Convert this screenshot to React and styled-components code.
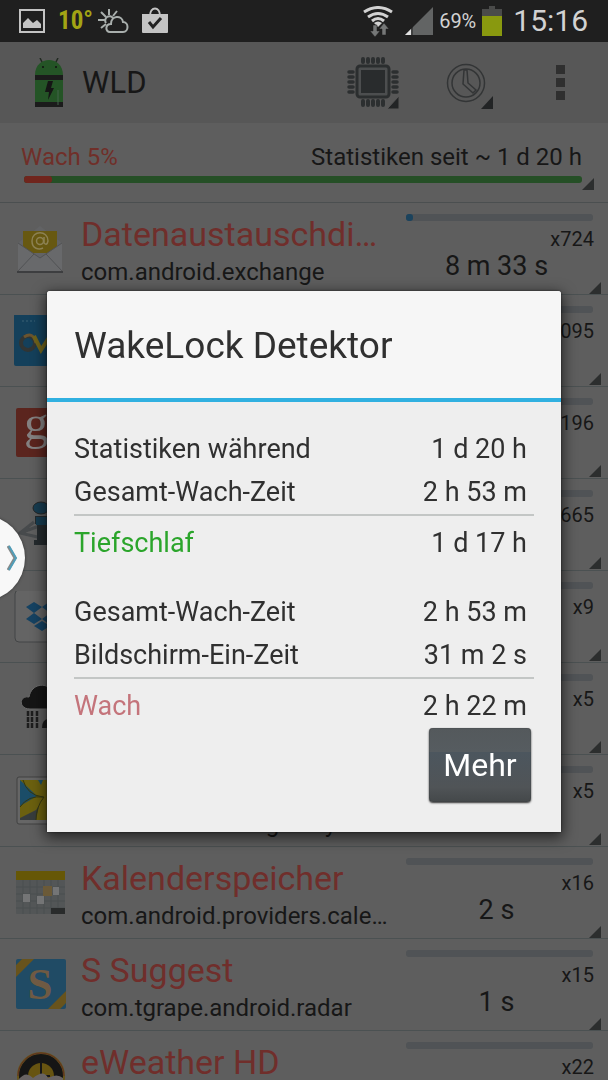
import React from 'react'
import styled, { createGlobalStyle } from 'styled-components'

const GlobalStyle = createGlobalStyle`
  * {
    box-sizing: border-box;
  }

  body {
    margin: 0;
    background: #5e5e5e;
    font-family: Roboto, 'Liberation Sans', sans-serif;
    color: #171717;
  }

  button {
    font-family: inherit;
    border: 0;
    padding: 0;
    background: none;
    color: inherit;
  }
`

const Screen = styled.div`
  display: flex;
  flex-direction: column;
  height: 100vh;
  overflow: hidden;
`

const StatusBar = styled.header`
  display: flex;
  flex: none;
  align-items: center;
  justify-content: space-between;
  height: 42px;
  padding: 0 20px 0 18px;
  background: #1f1f1f;
  color: #d2d2d2;
`

const StatusGroup = styled.div`
  display: flex;
  align-items: center;
  gap: ${p => p.$gap}px;
`

const Temperature = styled.span`
  width: 28px;
  font: bold 25px/42px 'Liberation Sans Narrow', 'Roboto Condensed', Roboto, sans-serif;
  color: #a3a414;
`

const BatteryText = styled.span`
  font-size: 20px;
  line-height: 42px;
`

const Clock = styled.span`
  margin-left: 5px;
  font-size: 30px;
  line-height: 42px;
`

const ActionBar = styled.nav`
  display: flex;
  flex: none;
  align-items: center;
  height: 81px;
  padding: 0 35px 0 34px;
  background: #575757;
`

const AppTitle = styled.h1`
  flex: 1;
  margin: 0 0 0 18px;
  font-size: 31px;
  line-height: 40px;
  font-weight: 400;
`

const ActionButton = styled.button`
  display: flex;
  width: 60px;
  height: 60px;
  margin-right: ${p => p.$space}px;
`

const MenuButton = styled.button`
  display: flex;
  flex-direction: column;
  align-items: center;
  gap: 4px;
  width: 26px;
`

const MenuDot = styled.span`
  width: 9px;
  height: 9px;
  background: #2f2f2f;
`

const Summary = styled.section`
  flex: none;
  height: 80px;
  padding: 18px 14px 0 21px;
  border-bottom: 1px solid #4b4f50;
`

const SummaryText = styled.div`
  display: flex;
  justify-content: space-between;
  padding-right: 12px;
  font-size: 24px;
  line-height: 32px;
`

const AwakeLabel = styled.span`
  color: #702f29;
`

const SummaryMeter = styled.div`
  display: flex;
  align-items: flex-start;
  padding: 3px 0 0 3px;
`

const AwakeTrack = styled.div`
  flex: 1;
  height: 7px;
  border-radius: 3px;
  background: #254f26;
`

const AwakeBar = styled.div`
  height: 7px;
  border-radius: 3px;
  background: #70251d;
`

const Corner = styled.span`
  flex: none;
  width: 12px;
  height: 12px;
  background: #2c2e2e;
  clip-path: polygon(100% 0, 100% 100%, 0 100%);
`

const SummaryCorner = styled(Corner)`
  margin-top: 2px;
`

const AppList = styled.ul`
  flex: 1;
  min-height: 0;
  margin: 0;
  padding: 0;
  overflow: hidden;
  list-style: none;
`

const AppRow = styled.li`
  display: flex;
  height: 92px;
  border-bottom: 1px solid #4b5152;
`

const AppIcon = styled.div`
  flex: none;
  width: 81px;
  padding: 20px 0 0 14px;
`

const AppText = styled.div`
  flex: 1;
  min-width: 0;
  padding: 10px 16px 0 0;
`

const AppName = styled.div`
  height: 43px;
  font-size: 34px;
  line-height: 43px;
  color: #702e2b;
  white-space: nowrap;
  overflow: hidden;
  text-overflow: ellipsis;
`

const AppPackage = styled.div`
  font-size: 24px;
  line-height: 32px;
  white-space: nowrap;
  overflow: hidden;
  text-overflow: ellipsis;
`

const AppStats = styled.div`
  display: flex;
  flex-direction: column;
  flex: none;
  width: 202px;
  padding: 11px 7px 1px 0;
`

const UsageTrack = styled.div`
  flex: none;
  height: 7px;
  margin-right: 8px;
  border-radius: 3px;
  background: #505356;
`

const UsageBar = styled.div`
  height: 7px;
  border-radius: 3px;
  background: #1b435d;
`

const Count = styled.div`
  height: 29px;
  padding: 5px 7px 0 0;
  font-size: 20px;
  line-height: 26px;
  text-align: right;
`

const Duration = styled.div`
  height: 32px;
  padding-right: 14px;
  font-size: 27px;
  line-height: 32px;
  text-align: center;
`

const RowCorner = styled(Corner)`
  align-self: flex-end;
  margin-top: auto;
`

const Overlay = styled.div`
  position: fixed;
  inset: 42px 0 0;
  display: flex;
  align-items: center;
  justify-content: center;
  padding: 0 47px;
`

const Dialog = styled.section`
  width: 100%;
  border-radius: 3px 3px 0 0;
  background: #eeeeee;
  color: #303030;
  box-shadow: 0 4px 14px 2px rgba(0, 0, 0, 0.6), 0 0 2px #202020;
`

const DialogTitle = styled.h2`
  margin: 0;
  padding: 33px 27px 30px;
  border-bottom: 4px solid #30b0e0;
  border-radius: 3px 3px 0 0;
  background: #f6f6f6;
  font-size: 37px;
  line-height: 44px;
  font-weight: 400;
`

const DialogBody = styled.div`
  display: flex;
  flex-direction: column;
  padding: 26px 27px 30px;
`

const Times = styled.table`
  width: 100%;
  border-collapse: collapse;
  margin-bottom: ${p => p.$space}px;
  font-size: 27px;
  line-height: 43px;
`

const TimeLabel = styled.th`
  padding: 0;
  font-weight: 400;
  text-align: left;
  color: ${p => p.$color || 'inherit'};
`

const TimeValue = styled.td`
  padding: 0 7px 0 0;
  text-align: right;
`

const ResultGroup = styled.tbody`
  border-top: 2px solid #c3c6c5;

  ${TimeLabel}, ${TimeValue} {
    padding-top: 6px;
  }
`

const MoreButton = styled.button`
  align-self: flex-end;
  width: 102px;
  height: 74px;
  margin-right: 3px;
  border-radius: 4px;
  background: linear-gradient(#54595c, #565c60 32%, #4c565e 33%, #505457 80%, #44484a);
  box-shadow: 0 1px 2px #333, inset 0 0 1px #222;
  color: #ffffff;
  font-size: 32px;
`

const EdgeHandle = styled.button`
  position: fixed;
  top: 515px;
  left: -61px;
  display: flex;
  align-items: center;
  justify-content: flex-end;
  width: 86px;
  height: 86px;
  padding-right: 7px;
  border-radius: 50%;
  background: #f8f8f8;
  box-shadow: 0 0 3px #333;
`

function PictureIcon() {
  return (
    <svg width='28' height='26' viewBox='0 0 28 26'>
      <path d='M2 2h24v22H2z' fill='none' stroke='#c4c4c4' strokeWidth='2' />
      <path d='M5 20v-5l5-5 5 5 4-3 4 4v4z' fill='#c4c4c4' />
    </svg>
  )
}

function WeatherIcon() {
  return (
    <svg width='31' height='26' viewBox='0 0 31 26' fill='none' stroke='#a9afad' strokeWidth='2'>
      <path d='M11 1v6M3 4l5 5M19 3l-4 5M0 12h7M3 20l5-4' />
      <path d='M8 15a4 4 0 1 1 7-5' />
      <path d='M12 24c-5 0-5-8 1-8 0-9 11-9 12-2 6 0 6 10 0 10z' />
    </svg>
  )
}

function StoreIcon() {
  return (
    <svg width='28' height='28' viewBox='0 0 28 28'>
      <path d='M9 9C9-1 19-1 19 9' fill='none' stroke='#c4c4c4' strokeWidth='2' />
      <path d='M1 7h26v18q0 1-1 1H2q-1 0-1-1z' fill='#c4c4c4' />
      <path d='M8 15l4 5 8-9' fill='none' stroke='#222' strokeWidth='3' />
    </svg>
  )
}

function WifiIcon() {
  return (
    <svg width='30' height='31' viewBox='0 0 30 31'>
      <g fill='none' stroke='#d2d2d2' strokeWidth='3'>
        <path d='M1 6Q15-3 29 6M5 11Q15 4 25 11M9 15Q15 10 21 15' />
      </g>
      <path d='M11 17q4-3 8 0l-4 4z' fill='#d2d2d2' />
      <path d='M10 19h4v6h3l-5 6-5-6h3zM19 29v-6h-3l5-6 5 6h-3v6z' fill='#757777' stroke='#1f1f1f' strokeWidth='.5' />
    </svg>
  )
}

function SignalIcon() {
  return (
    <svg width='28' height='28' viewBox='0 0 28 28'>
      <path d='M28 0v28H0z' fill='#626464' />
      <path d='M6 22v6H0z' fill='#e0e0e0' />
      <path d='M7 20v8' stroke='#1f1f1f' />
    </svg>
  )
}

function BatteryIcon() {
  return (
    <svg width='20' height='30' viewBox='0 0 20 30'>
      <path d='M0 3h7V0h6v3h7v8H0z' fill='#4a4b4a' />
      <path d='M0 10h20v20H0z' fill='#89990f' />
    </svg>
  )
}

function AndroidLogo() {
  return (
    <svg width='30' height='50' viewBox='0 0 30 50'>
      <path d='M6 0l3 6M24 0l-3 6' stroke='#222b22' strokeWidth='1.5' />
      <path d='M1 17C1-3 29-3 29 17zM1 22h28v22H1z' fill='#245426' />
      <circle cx='9' cy='9' r='1' fill='#111' />
      <circle cx='22' cy='9' r='1' fill='#111' />
      <path d='M1 17h28v5H1zM1 44h28v5H1z' fill='#1b1b1b' />
      <path d='M14 23h5l-2 7h3l-6 12 1-8h-4z' fill='#151515' />
      <path d='M24 32v15' stroke='#42634a' />
    </svg>
  )
}

function ChipIcon() {
  const pins = [16, 21, 26, 31, 36]
  return (
    <svg width='60' height='60' viewBox='0 0 60 60'>
      <g stroke='#2c2f30' strokeWidth='4' strokeLinecap='round'>
        {pins.map(p => (
          <path key={p} d={`M${p + 2} 6v3M${p + 2} 48v4`} />
        ))}
      </g>
      <g stroke='#2c2f30' strokeWidth='3.5' strokeLinecap='round'>
        {pins.map(p => (
          <path key={p} d={`M4 ${p + 3}h4M48 ${p + 3}h4`} />
        ))}
      </g>
      <rect x='12' y='13' width='32' height='31' rx='3' fill='#4c4e4f' stroke='#2b2e2f' strokeWidth='3' />
      <rect x='16' y='17' width='24' height='23' fill='#292c2d' />
      <path d='M54 43v13H42z' fill='#222425' stroke='#575757' />
    </svg>
  )
}

function ClockIcon() {
  return (
    <svg width='60' height='60' viewBox='0 0 60 60'>
      <g fill='none' stroke='#333536' strokeWidth='1.5'>
        <circle cx='27' cy='30' r='18.5' />
        <circle cx='27' cy='30' r='14' />
        <path d='M25 17h3l1 13 8 7-3 3-10-9z' />
      </g>
      <path d='M54 43v13H42z' fill='#222425' />
    </svg>
  )
}

const icons = {
  mail: (
    <>
      <path d='M4 20L26 3l22 17v28H4z' fill='#626365' />
      <path d='M9 8h34v22H9z' fill='#675811' />
      <path d='M4 20l22 15 22-15v28H4z' fill='#68696b' />
      <path d='M4 48l16-17M48 48L32 31M4 20l22 15 22-15' stroke='#515254' fill='none' />
      <path d='M3 49h46' stroke='#3d3e40' strokeWidth='2' />
      <g fill='none' stroke='#8c8153' strokeWidth='1.5'>
        <circle cx='26' cy='18' r='3.5' />
        <path d='M30 14v6q3 3 4-2c0-11-16-11-16 0 0 8 7 9 11 7' />
      </g>
    </>
  ),
  voip: (
    <>
      <rect y='-1' width='52' height='52' rx='2' fill='#14405b' />
      <path d='M8 6h13' stroke='#3a6175' strokeDasharray='2 2' />
      <circle cx='14' cy='28' r='7' fill='none' stroke='#313534' strokeWidth='4' />
      <path d='M10 22q9-6 12 6' fill='none' stroke='#6a5430' strokeWidth='3' />
      <path d='M20 21l7 14 9-14' fill='none' stroke='#70631a' strokeWidth='4' />
    </>
  ),
  google: (
    <>
      <rect x='2' y='1' width='49' height='49' rx='2' fill='#5b251e' />
      <text x='10' y='32' fontFamily='Liberation Serif, serif' fontSize='49' fill='#838080'>g</text>
    </>
  ),
  info: (
    <>
      <path d='M20 23L6 34l22 5M6 34l22-8' fill='none' stroke='#474a4c' strokeWidth='3' />
      <ellipse cx='27' cy='9' rx='8' ry='6' fill='#173c50' stroke='#242627' />
      <path d='M21 17h14v24h5v5H20v-5h3V25h-2z' fill='#242a2d' />
      <path d='M22 18h12v8H22z' fill='#173c50' />
    </>
  ),
  dropbox: (
    <>
      <rect x='1' y='-1' width='50' height='52' rx='4' fill='#646464' stroke='#434546' />
      <path
        d='M20 11l8 5-8 6-8-6zM35 11l8 5-7 6-8-6zM20 22l8 6-8 5-8-5zM36 22l7 6-8 5-7-5zM20 35l8-5 8 5-8 5z'
        fill='#154262'
      />
    </>
  ),
  rain: (
    <>
      <path d='M16 26C4 26 5 12 15 14 18-2 37 0 38 10c16 0 14 16 6 16z' fill='#151515' stroke='#6b6b6b' />
      <path d='M14 28v18M18 28v18M23 28v18' stroke='#1d1d1d' strokeWidth='2.5' strokeDasharray='5 1' />
      <path d='M28 45q0-9 7-9v-7h12v16z' fill='#191919' />
    </>
  ),
  gallery: (
    <>
      <rect x='3' y='2' width='48' height='47' rx='2' fill='#666' stroke='#404141' />
      <path d='M6 5h44v40H6z' fill='#6b600f' />
      <path d='M6 5l17 16L6 31zM24 5h5l-2 5z' fill='#1b4d68' />
      <path d='M6 43l16-8 3-4-3 14H6z' fill='#373c3c' />
      <path d='M9 5q4 15 20 17M6 32q8-12 24-10-8 10-8 23' fill='none' stroke='#35370f' />
    </>
  ),
  calendar: (
    <>
      <rect x='2' y='4' width='49' height='43' rx='1' fill='#535657' />
      <path d='M2 4h49v9H2z' fill='#665706' />
      <path d='M2 20h49M2 27h49M2 34h49M2 41h49M9 13v34M16 13v34M23 13v34M30 13v34M37 13v34M44 13v34' stroke='#4a4e50' />
      <path d='M9 27h7v8H9zM23 29h7v8h-7zM39 20h6v8h-6z' fill='#747576' />
      <path d='M29 19h9v10h-9z' fill='#6b5a38' />
      <path d='M37 41h14v6H37z' fill='#292b2b' />
    </>
  ),
  suggest: (
    <>
      <rect x='2' y='0' width='50' height='50' rx='2' fill='#204b65' />
      <path d='M2 18V6L8 0h12zM52 32v12l-6 6H34z' fill='#68531c' />
      <text x='26' y='40' textAnchor='middle' fontFamily='Liberation Serif, serif' fontSize='45' fontWeight='700' fill='#6f5a43'>
        S
      </text>
    </>
  ),
  weather: (
    <>
      <circle cx='27' cy='25' r='23' fill='#151515' stroke='#66551a' strokeWidth='2' />
      <path d='M4 25a23 23 0 0 1 46 0' fill='none' stroke='#602d22' />
      <circle cx='27' cy='25' r='13' fill='#675411' />
      <path d='M27 11v14h9' fill='none' stroke='#171717' strokeWidth='2' />
      <path d='M4 29q8-10 15-2 11-9 15 0 9-5 15 0v12H4z' fill='#686363' />
    </>
  ),
}

const apps = [
  { icon: 'mail', name: 'Datenaustauschdi…', pkg: 'com.android.exchange', count: 724, time: '8 m 33 s', usage: 4 },
  { icon: 'voip', count: 1095 },
  { icon: 'google', count: 196 },
  { icon: 'info', count: 665 },
  { icon: 'dropbox', count: 9 },
  { icon: 'rain', count: 5 },
  { icon: 'gallery', pkg: 'com.sec.android.gallery3d', count: 5 },
  { icon: 'calendar', name: 'Kalenderspeicher', pkg: 'com.android.providers.cale…', count: 16, time: '2 s' },
  { icon: 'suggest', name: 'S Suggest', pkg: 'com.tgrape.android.radar', count: 15, time: '1 s' },
  { icon: 'weather', name: 'eWeather HD', count: 22 },
]

function AppItem({ app }) {
  return (
    <AppRow>
      <AppIcon>
        <svg width='54' height='54' viewBox='0 0 54 54'>{icons[app.icon]}</svg>
      </AppIcon>
      <AppText>
        <AppName>{app.name}</AppName>
        <AppPackage>{app.pkg}</AppPackage>
      </AppText>
      <AppStats>
        <UsageTrack>
          {app.usage && <UsageBar style={{ width: `${app.usage}%` }} />}
        </UsageTrack>
        <Count>x{app.count}</Count>
        <Duration>{app.time}</Duration>
        <RowCorner />
      </AppStats>
    </AppRow>
  )
}

function TimeTable({ rows, result, color, space }) {
  return (
    <Times $space={space}>
      <tbody>
        {rows.map(([label, value]) => (
          <tr key={label}>
            <TimeLabel scope='row'>{label}</TimeLabel>
            <TimeValue>{value}</TimeValue>
          </tr>
        ))}
      </tbody>
      <ResultGroup>
        <tr>
          <TimeLabel scope='row' $color={color}>{result[0]}</TimeLabel>
          <TimeValue>{result[1]}</TimeValue>
        </tr>
      </ResultGroup>
    </Times>
  )
}

export default function App() {
  return (
    <Screen>
      <GlobalStyle />
      <StatusBar>
        <StatusGroup $gap={12}>
          <PictureIcon />
          <Temperature>10°</Temperature>
          <WeatherIcon />
          <StoreIcon />
        </StatusGroup>
        <StatusGroup $gap={6}>
          <WifiIcon />
          <span />
          <SignalIcon />
          <BatteryText>69%</BatteryText>
          <BatteryIcon />
          <Clock>15:16</Clock>
        </StatusGroup>
      </StatusBar>

      <ActionBar>
        <AndroidLogo />
        <AppTitle>WLD</AppTitle>
        <ActionButton $space={34} aria-label='CPU'><ChipIcon /></ActionButton>
        <ActionButton $space={48} aria-label='Zeit'><ClockIcon /></ActionButton>
        <MenuButton aria-label='Menü'>
          <MenuDot />
          <MenuDot />
          <MenuDot />
        </MenuButton>
      </ActionBar>

      <Summary>
        <SummaryText>
          <AwakeLabel>Wach 5%</AwakeLabel>
          <span>Statistiken seit ~ 1 d 20 h</span>
        </SummaryText>
        <SummaryMeter>
          <AwakeTrack>
            <AwakeBar style={{ width: '5%' }} />
          </AwakeTrack>
          <SummaryCorner />
        </SummaryMeter>
      </Summary>

      <AppList>
        {apps.map(app => <AppItem key={app.icon} app={app} />)}
      </AppList>

      <Overlay>
        <Dialog role='dialog' aria-labelledby='dialog-title'>
          <DialogTitle id='dialog-title'>WakeLock Detektor</DialogTitle>
          <DialogBody>
            <TimeTable
              rows={[['Statistiken während', '1 d 20 h'], ['Gesamt-Wach-Zeit', '2 h 53 m']]}
              result={['Tiefschlaf', '1 d 17 h']}
              color='#2ba52b'
              space={26}
            />
            <TimeTable
              rows={[['Gesamt-Wach-Zeit', '2 h 53 m'], ['Bildschirm-Ein-Zeit', '31 m 2 s']]}
              result={['Wach', '2 h 22 m']}
              color='#c4747b'
              space={0}
            />
            <MoreButton>Mehr</MoreButton>
          </DialogBody>
        </Dialog>
      </Overlay>

      <EdgeHandle aria-label='Leiste öffnen'>
        <svg width='11' height='28' viewBox='0 0 11 28' fill='none'>
          <path d='M1 2l7 12-7 12' stroke='#858989' strokeWidth='3' />
          <path d='M2 2l7 12-7 12' stroke='#519eb9' strokeWidth='2' />
        </svg>
      </EdgeHandle>
    </Screen>
  )
}
